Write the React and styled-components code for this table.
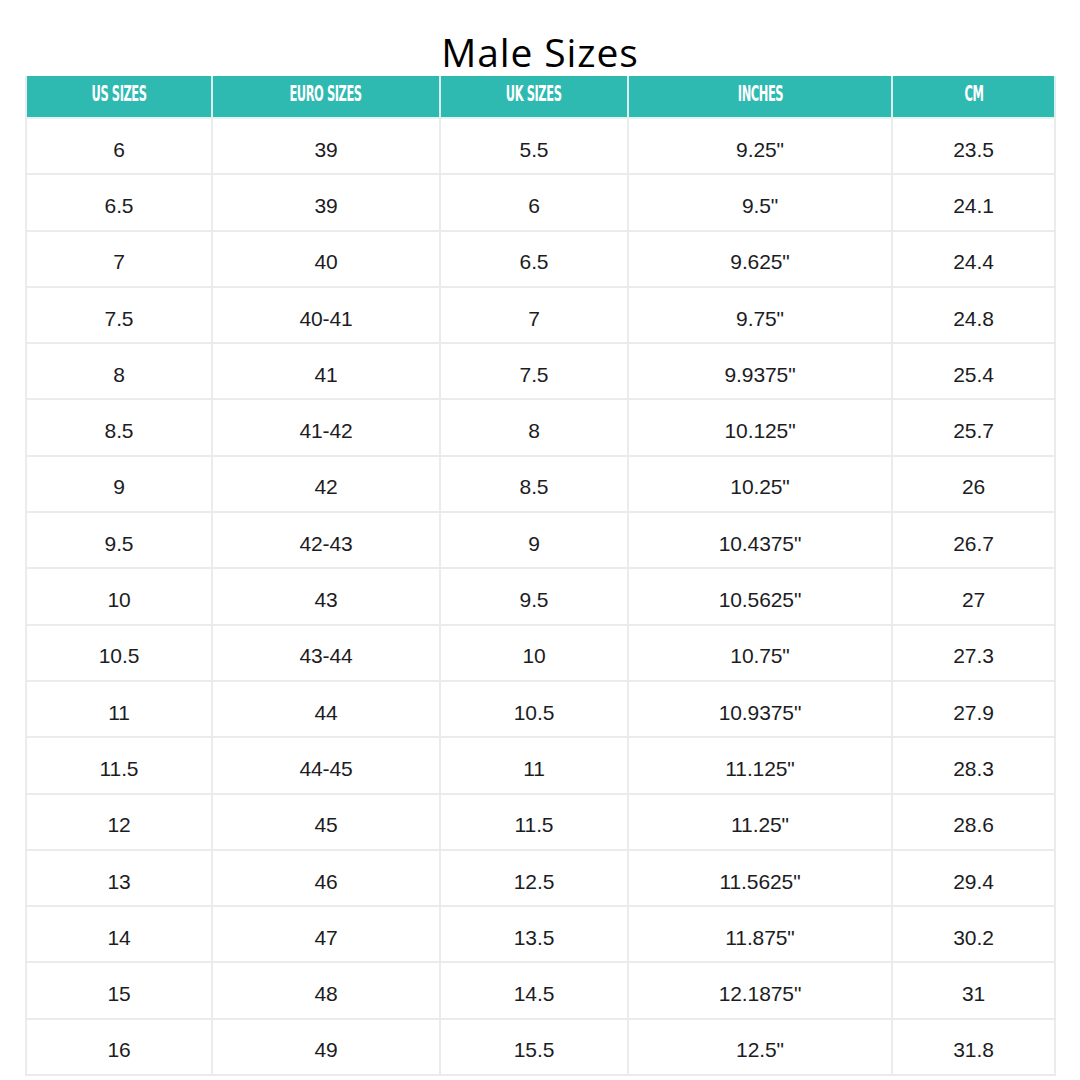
import React from "react";
import styled, { createGlobalStyle } from "styled-components";

const Global = createGlobalStyle`
  html, body { margin: 0; padding: 0; background: #ffffff; }
  body { width: 1080px; height: 1080px; overflow: hidden; }
`;

const Page = styled.div`
  width: 1080px;
  height: 1080px;
  background: #fff;
  display: flex;
  flex-direction: column;
  align-items: flex-start;
`;

const Title = styled.h1`
  margin: 0;
  width: 1080px;
  box-sizing: border-box;
  padding-top: 28px;
  text-align: center;
  font-family: "Open Sans", sans-serif;
  font-weight: 400;
  font-size: 39px;
  line-height: 48px;
  color: #000;
  letter-spacing: 0.9px;
`;

const Grid = styled.div`
  margin-left: 25px;
  display: grid;
  grid-template-columns: 186px 228px 188px 264px 163px;
  grid-template-rows: 43px repeat(17, 56.3px);
  border-left: 2px solid #ebebeb;
  box-sizing: border-box;
  width: 1031px;
`;

const Head = styled.div`
  background: #2eb9b1;
  border-right: 2px solid #d9efed;
  border-bottom: 2px solid #e6f3f2;
  display: flex;
  align-items: flex-start;
  justify-content: center;
  padding-top: 6.5px;
  box-sizing: border-box;
`;

const HeadText = styled.span`
  display: inline-block;
  font-family: "DejaVu Sans", sans-serif;
  font-weight: 700;
  font-size: 20.5px;
  line-height: 22px;
  color: #fff;
  letter-spacing: -0.8px;
  transform: scaleX(0.56);
  white-space: nowrap;
`;

const Cell = styled.div`
  border-right: 2px solid #ebebeb;
  border-bottom: 2px solid #ebebeb;
  display: flex;
  align-items: center;
  justify-content: center;
  padding-top: 7px;
  box-sizing: border-box;
  font-family: "Liberation Sans", Arial, sans-serif;
  font-size: 21px;
  color: #1c1c24;
  letter-spacing: -0.1px;
`;

const headers = ["US SIZES", "EURO SIZES", "UK SIZES", "INCHES", "CM"];
const rows = [
  ["6", "39", "5.5", "9.25\"", "23.5"],
  ["6.5", "39", "6", "9.5\"", "24.1"],
  ["7", "40", "6.5", "9.625\"", "24.4"],
  ["7.5", "40-41", "7", "9.75\"", "24.8"],
  ["8", "41", "7.5", "9.9375\"", "25.4"],
  ["8.5", "41-42", "8", "10.125\"", "25.7"],
  ["9", "42", "8.5", "10.25\"", "26"],
  ["9.5", "42-43", "9", "10.4375\"", "26.7"],
  ["10", "43", "9.5", "10.5625\"", "27"],
  ["10.5", "43-44", "10", "10.75\"", "27.3"],
  ["11", "44", "10.5", "10.9375\"", "27.9"],
  ["11.5", "44-45", "11", "11.125\"", "28.3"],
  ["12", "45", "11.5", "11.25\"", "28.6"],
  ["13", "46", "12.5", "11.5625\"", "29.4"],
  ["14", "47", "13.5", "11.875\"", "30.2"],
  ["15", "48", "14.5", "12.1875\"", "31"],
  ["16", "49", "15.5", "12.5\"", "31.8"],
];

export default function App() {
  return (
    <Page>
      <Global />
      <Title>Male Sizes</Title>
      <Grid>
        {headers.map((h) => (
          <Head key={h}>
            <HeadText>{h}</HeadText>
          </Head>
        ))}
        {rows.map((r, i) =>
          r.map((v, j) => <Cell key={i + "-" + j}>{v}</Cell>)
        )}
      </Grid>
    </Page>
  );
}
